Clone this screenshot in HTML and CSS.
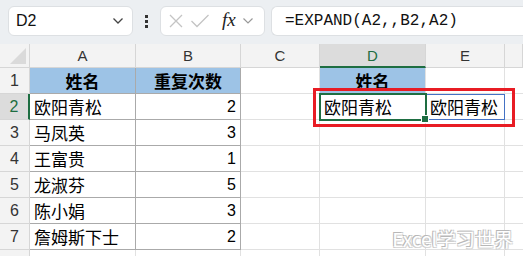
FILE: index.html
```html
<!DOCTYPE html>
<html>
<head>
<meta charset="utf-8">
<link rel="stylesheet" href="styles.css">
</head>
<body>
<div class="app">
  <div class="toolbar">
    <div class="namebox">
      <span class="ref">D2</span>
      <svg class="chev" width="12" height="8" viewBox="0 0 12 8"><path d="M1.5 1.5 L6 6 L10.5 1.5" fill="none" stroke="#444" stroke-width="1.3"/></svg>
    </div>
    <div class="dots"><i></i><i></i><i></i></div>
    <div class="fxbox">
      <svg width="16" height="16" viewBox="0 0 16 16"><path d="M2 2 L14 14 M14 2 L2 14" stroke="#c4c4c4" stroke-width="1.3"/></svg>
      <svg width="20" height="16" viewBox="0 0 20 16"><path d="M1.5 8 L7 13.5 L18.5 2" fill="none" stroke="#c4c4c4" stroke-width="1.3"/></svg>
      <span class="fx">fx</span>
      <svg width="12" height="8" viewBox="0 0 12 8"><path d="M1.5 1.5 L6 6 L10.5 1.5" fill="none" stroke="#999" stroke-width="1.2"/></svg>
    </div>
    <div class="formula">=EXPAND(A2,,B2,A2)</div>
  </div>
  <div class="sheet">
    <div class="grid">
      <div class="corner"><span class="tri"></span></div>
      <div class="colh">A</div>
      <div class="colh">B</div>
      <div class="colh">C</div>
      <div class="colh sel">D</div>
      <div class="colh">E</div>
      <div class="colh last"></div>

      <div class="rowh">1</div>
      <div class="c t hd">姓名</div>
      <div class="c t hd">重复次数</div>
      <div class="c"></div>
      <div class="c hd">姓名</div>
      <div class="c"></div>
      <div class="c last"></div>

      <div class="rowh sel">2</div>
      <div class="c t">欧阳青松</div>
      <div class="c t num">2</div>
      <div class="c"></div>
      <div class="c">欧阳青松</div>
      <div class="c spill">欧阳青松</div>
      <div class="c last"></div>

      <div class="rowh">3</div>
      <div class="c t">马凤英</div>
      <div class="c t num">3</div>
      <div class="c"></div><div class="c"></div><div class="c"></div><div class="c last"></div>

      <div class="rowh">4</div>
      <div class="c t">王富贵</div>
      <div class="c t num">1</div>
      <div class="c"></div><div class="c"></div><div class="c"></div><div class="c last"></div>

      <div class="rowh">5</div>
      <div class="c t">龙淑芬</div>
      <div class="c t num">5</div>
      <div class="c"></div><div class="c"></div><div class="c"></div><div class="c last"></div>

      <div class="rowh">6</div>
      <div class="c t">陈小娟</div>
      <div class="c t num">3</div>
      <div class="c"></div><div class="c"></div><div class="c"></div><div class="c last"></div>

      <div class="rowh">7</div>
      <div class="c t">詹姆斯下士</div>
      <div class="c t num">2</div>
      <div class="c"></div><div class="c"></div><div class="c"></div><div class="c last"></div>

      <div class="rowh"></div>
      <div class="c"></div><div class="c"></div><div class="c"></div><div class="c"></div><div class="c"></div><div class="c last"></div>
    </div>
    <div class="active"><span class="handle"></span></div>
    <div class="redbox"></div>
    <div class="watermark">Excel学习世界</div>
  </div>
</div>
</body>
</html>
```

FILE: styles.css
```css
html, body {
  margin: 0;
  padding: 0;
  background: #ffffff;
  overflow: hidden;
}
.app {
  width: 523px;
  height: 256px;
  font-family: "Noto Sans CJK SC", "Liberation Sans", sans-serif;
  color: #000;
}
.toolbar {
  height: 44px;
  background: #eceff2;
  display: flex;
  align-items: flex-start;
  padding: 6px 0 0 8px;
  box-sizing: border-box;
}
.namebox {
  width: 125px;
  height: 30px;
  box-sizing: border-box;
  background: #fff;
  border: 1px solid #dde0e3;
  border-radius: 6px;
  display: flex;
  align-items: center;
  justify-content: space-between;
  padding: 0 8px 0 7px;
}
.ref {
  font-family: "Liberation Sans", sans-serif;
  font-size: 16px;
  color: #111;
}
.dots {
  width: 27px;
  height: 30px;
  display: flex;
  flex-direction: column;
  align-items: center;
  justify-content: center;
  gap: 2px;
}
.dots i {
  display: block;
  width: 3px;
  height: 3px;
  background: #333;
}
.fxbox {
  width: 105px;
  height: 30px;
  box-sizing: border-box;
  background: #fff;
  border: 1px solid #dde0e3;
  border-radius: 6px;
  display: flex;
  align-items: center;
  padding: 0 3px 0 7px;
  gap: 6px;
}
.fx {
  font-family: "Liberation Serif", serif;
  font-style: italic;
  font-size: 19px;
  color: #222;
  margin-left: 6px;
  line-height: 1;
  margin-top: -3px;
}
.formula {
  flex: 1;
  margin-left: 6px;
  height: 30px;
  box-sizing: border-box;
  background: #fff;
  border: 1px solid #dde0e3;
  border-right: none;
  border-radius: 6px 0 0 6px;
  font-family: "Liberation Mono", monospace;
  font-size: 16px;
  line-height: 28px;
  padding-left: 13px;
  color: #111;
}
.sheet {
  position: relative;
  height: 212px;
  overflow: hidden;
}
.grid {
  display: grid;
  grid-template-columns: 30px 106px 105px 79px 106px 79px 1fr;
  grid-template-rows: 24px repeat(8, 26px);
}
.grid > div {
  box-sizing: border-box;
}
.corner {
  background: #f3f3f3;
  border-right: 1px solid #d6d6d6;
  border-bottom: 1px solid #d6d6d6;
  position: relative;
}
.tri {
  position: absolute;
  right: 3px;
  bottom: 3px;
  width: 0;
  height: 0;
  border-left: 16px solid transparent;
  border-bottom: 16px solid #dadada;
}
.colh {
  background: #f3f3f3;
  border-right: 1px solid #d6d6d6;
  border-bottom: 1px solid #d6d6d6;
  font-family: "Liberation Sans", sans-serif;
  font-size: 15px;
  color: #333;
  display: flex;
  align-items: center;
  justify-content: center;
}
.colh.sel {
  background: #dcdcdc;
  border-bottom: 2px solid #1e6e42;
  color: #1e6e42;
}
.rowh {
  background: #f3f3f3;
  border-right: 1px solid #d6d6d6;
  border-bottom: 1px solid #d6d6d6;
  font-family: "Liberation Sans", sans-serif;
  font-size: 16px;
  color: #333;
  display: flex;
  align-items: center;
  justify-content: center;
}
.rowh.sel {
  background: #dcdcdc;
  border-right: 2px solid #1e6e42;
  color: #1e6e42;
}
.c {
  border-right: 1px solid #e1e1e1;
  border-bottom: 1px solid #e1e1e1;
  font-size: 17px;
  line-height: 25px;
  padding-left: 4px;
  white-space: nowrap;
  overflow: hidden;
}
.c.t {
  border-right-color: #aaaaaa;
  border-bottom-color: #aaaaaa;
}
.c.hd {
  background: #9dc3e6;
  font-weight: bold;
  text-align: center;
  padding-left: 0;
}
.c.num {
  text-align: right;
  padding-right: 4px;
  font-family: "Liberation Sans", sans-serif;
  font-size: 16px;
}
.c.spill {
  border: 1px solid #4472c4;
  padding-left: 3px;
  line-height: 24px;
}
.c.last {
  border-right: none;
}
.active {
  position: absolute;
  left: 319px;
  top: 49px;
  width: 108px;
  height: 28px;
  box-sizing: border-box;
  border: 2px solid #1e6e42;
}
.handle {
  position: absolute;
  right: -4px;
  bottom: -4px;
  width: 6px;
  height: 6px;
  background: #1e6e42;
  border: 1px solid #fff;
}
.redbox {
  position: absolute;
  left: 313px;
  top: 44px;
  width: 202px;
  height: 39px;
  box-sizing: border-box;
  border: 3px solid #e81c24;
}
.watermark {
  position: absolute;
  right: 10px;
  bottom: 6px;
  font-size: 19px;
  line-height: 22px;
  color: #ffffff;
  text-shadow: -1px -1px 0 #b8b8b8, 1px 1px 0 #d8d8d8, 1px -1px 0 #cfcfcf, -1px 1px 0 #cfcfcf;
}
```
